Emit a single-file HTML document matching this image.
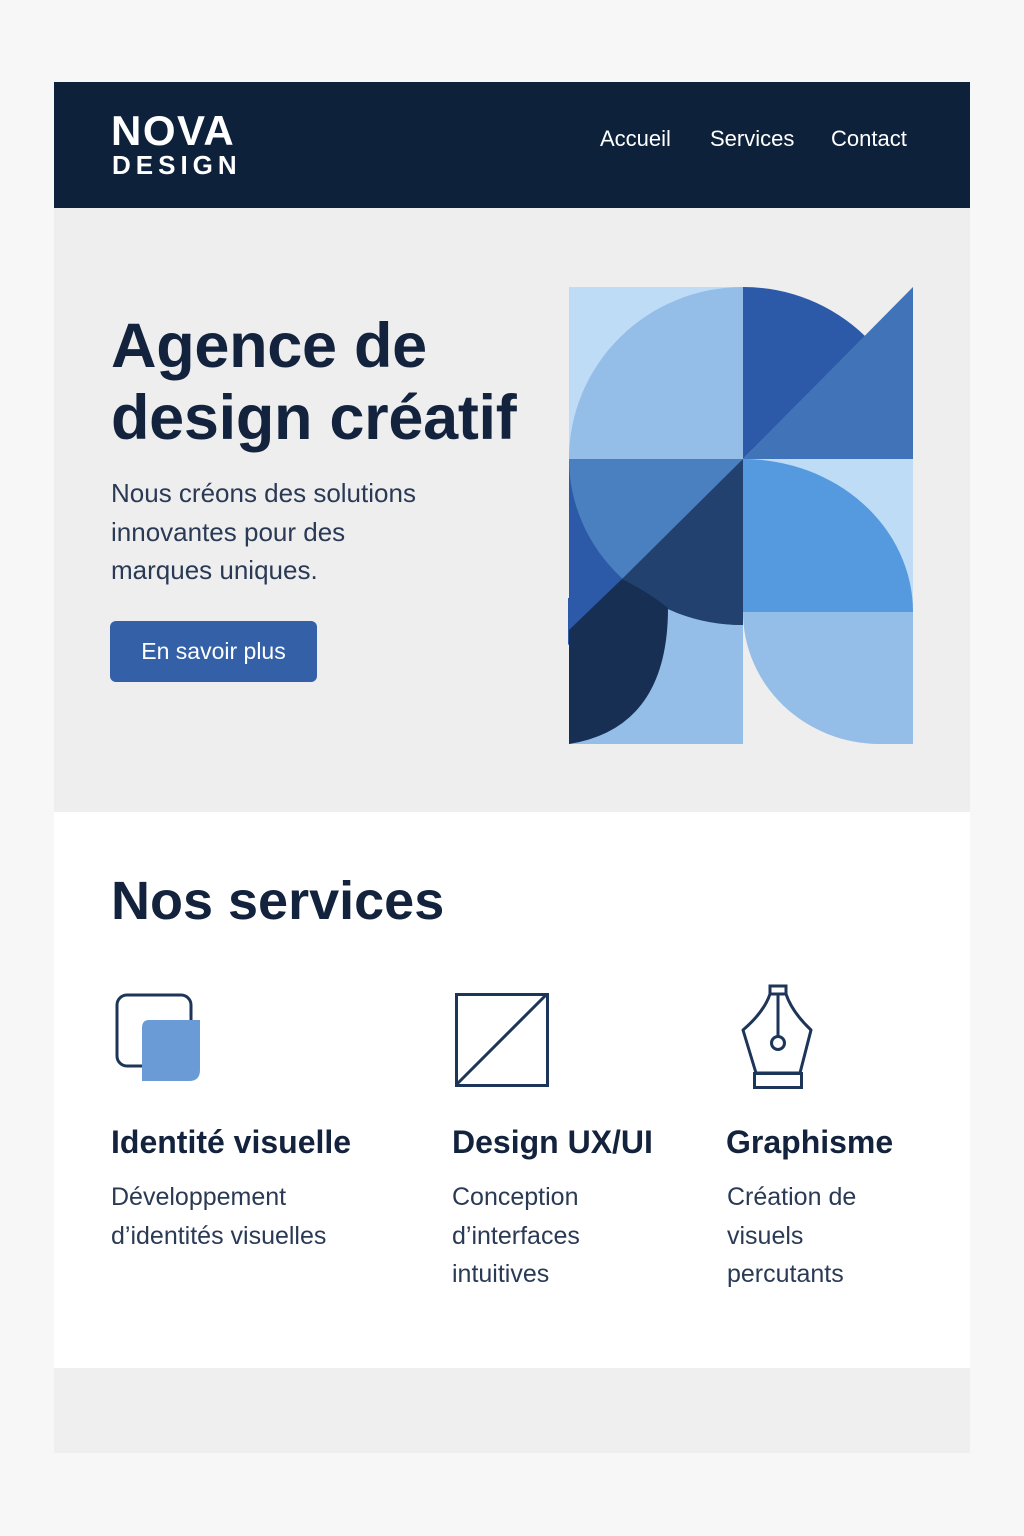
<!DOCTYPE html>
<html><head><meta charset="utf-8"><style>
*{margin:0;padding:0;box-sizing:border-box}
body{width:1024px;height:1536px;background:#f7f7f7;font-family:"Liberation Sans","DejaVu Sans",sans-serif;position:relative;color:#13233d}
.hdr{position:absolute;left:54px;top:82px;width:916px;height:126px;background:#0e213a}
.logo1{position:absolute;left:57px;top:28px;color:#fff;font-weight:bold;font-size:42px;letter-spacing:1.5px;line-height:1}
.logo2{position:absolute;left:58px;top:70px;color:#fff;font-weight:bold;font-size:26px;letter-spacing:5px;line-height:1}
.nav{position:absolute;top:44px;color:#fff;font-size:22px}
.hero{position:absolute;left:54px;top:208px;width:916px;height:604px;background:#eeeeee}
h1{position:absolute;left:57px;top:102px;font-size:63px;line-height:72px;font-weight:bold;color:#13233d;letter-spacing:-0.3px}
.sub{position:absolute;left:57px;top:266px;font-size:26px;line-height:38.5px;color:#2a3a55}
.btn{position:absolute;left:56px;top:413px;width:207px;height:61px;background:#3460a8;border-radius:6px;color:#fff;font-size:23px;line-height:61px;text-align:center}
.svc{position:absolute;left:54px;top:812px;width:916px;height:556px;background:#fff}
h2{position:absolute;left:57px;top:58px;font-size:54px;font-weight:bold;color:#13233d}
.t{position:absolute;top:312px;font-size:32px;font-weight:bold;color:#13233d}
.d{position:absolute;top:366px;font-size:25px;line-height:38.5px;color:#2a3a55}
.foot{position:absolute;left:54px;top:1368px;width:916px;height:85px;background:#efefef}
</style></head><body>
<div class="hdr">
<div class="logo1">NOVA</div><div class="logo2">DESIGN</div>
<div class="nav" style="left:546px">Accueil</div>
<div class="nav" style="left:656px">Services</div>
<div class="nav" style="left:777px">Contact</div>
</div>
<div class="hero">
<h1>Agence de<br>design créatif</h1>
<div class="sub">Nous créons des solutions<br>innovantes pour des<br>marques uniques.</div>
<div class="btn">En savoir plus</div>
</div>
<svg style="position:absolute;left:0;top:0" width="1024" height="1536">
<rect x="569" y="287" width="174" height="172" fill="#bedcf5"/>
<path d="M743,459 L569,459 A174,172 0 0 1 743,287 Z" fill="#94bde8"/>
<path d="M743,459 L743,287 A174,172 0 0 1 865,336 Z" fill="#2d5aa8"/>
<path d="M743,459 L913,287 L913,459 Z" fill="#4073b8"/>
<rect x="569" y="600" width="174" height="144" fill="#94bde8"/>
<rect x="569" y="459" width="174" height="141" fill="#2d5aa8"/>
<path d="M568,598 L630,598 L568,645 Z" fill="#2d5aa8"/>
<path d="M743,459 L569,459 A174,166 0 0 0 743,625 Z" fill="#4a7fc0"/>
<path d="M743,459 L622,579 A174,166 0 0 0 743,625 Z" fill="#22416e"/>
<path d="M569,630 L622,579 Q648,592 668,608 Q668,728 569,744 Z" fill="#172f52"/>
<rect x="743" y="459" width="170" height="153" fill="#bedcf5"/>
<path d="M743,612 L743,459 A170,153 0 0 1 913,612 Z" fill="#5599de"/>
<path d="M743,612 H913 V744 H880 A137,132 0 0 1 743,612 Z" fill="#94bde8"/>
</svg>
<div class="svc">
<h2>Nos services</h2>
<svg style="position:absolute;left:0;top:0" width="916" height="556">
<rect x="63" y="183" width="74" height="71" rx="10" fill="none" stroke="#1d3558" stroke-width="3"/>
<path d="M95,208 H146 V258 Q146,269 135,269 H88 V216 Q88,208 95,208Z" fill="#6b9bd6"/>
<rect x="402.5" y="182.5" width="91" height="91" fill="none" stroke="#1d3558" stroke-width="3"/>
<line x1="402" y1="273" x2="493" y2="182" stroke="#1d3558" stroke-width="3"/>
<rect x="716" y="174" width="16" height="8" fill="none" stroke="#1d3558" stroke-width="3"/>
<path d="M716,182 Q710,200 689,218 L702,261 H746 L757,218 Q738,200 732,182" fill="none" stroke="#1d3558" stroke-width="3" stroke-linejoin="round"/>
<line x1="724" y1="182" x2="724" y2="224" stroke="#1d3558" stroke-width="3"/>
<circle cx="724" cy="231" r="6.5" fill="none" stroke="#1d3558" stroke-width="3"/>
<rect x="700.5" y="261.5" width="47" height="14" fill="none" stroke="#1d3558" stroke-width="3"/>
</svg>
<div class="t" style="left:57px">Identité visuelle</div>
<div class="d" style="left:57px">Développement<br>d’identités visuelles</div>
<div class="t" style="left:398px">Design UX/UI</div>
<div class="d" style="left:398px">Conception<br>d’interfaces<br>intuitives</div>
<div class="t" style="left:672px">Graphisme</div>
<div class="d" style="left:673px">Création de<br>visuels<br>percutants</div>
</div>
<div class="foot"></div>
</body></html>
